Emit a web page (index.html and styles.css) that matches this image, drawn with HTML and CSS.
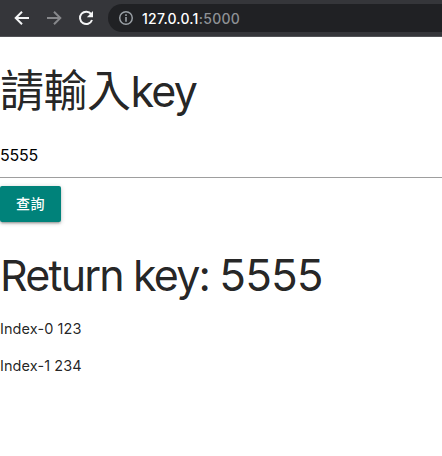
FILE: index.html
```html
<!DOCTYPE html>
<html lang="zh-Hant">
<head>
<meta charset="utf-8">
<title>127.0.0.1:5000</title>
<link rel="stylesheet" href="styles.css">
</head>
<body>
<header class="toolbar">
  <svg class="nav" viewBox="0 0 18 18"><path d="M16 9H3M9 2.7L2.7 9 9 15.3"/></svg>
  <svg class="nav nav-off" viewBox="0 0 18 18"><path d="M2 9h13M9 2.7L15.3 9 9 15.3"/></svg>
  <svg class="nav" viewBox="0 0 18 18"><path d="M14.2 5.2A6.2 6.2 0 1 0 15 11"/><path class="tip" d="M16 2v6.2H9.8z"/></svg>
  <div class="address">
    <svg class="info" viewBox="0 0 24 24"><path d="M10.8 6.5h2.4v2.4h-2.4zm0 4h2.4v7h-2.4zM12 1.5a10.5 10.5 0 1 0 0 21 10.5 10.5 0 0 0 0-21zm0 18.8a8.3 8.3 0 1 1 0-16.6 8.3 8.3 0 0 1 0 16.6z"/></svg>
    <span class="url">127.0.0.1<span class="port">:5000</span></span>
  </div>
</header>
<main>
  <h1 class="title"><span class="cjk">請輸入</span><span class="word">key</span></h1>
  <form>
    <input class="field" type="text" value="5555">
    <button class="btn" type="button">查詢</button>
  </form>
  <h1 class="result"><span class="word">Return key: </span>5555</h1>
  <p class="row">Index-0 123</p>
  <p class="row">Index-1 234</p>
</main>
</body>
</html>
```
FILE: styles.css
```css
* { box-sizing: border-box; }
body { margin: 0; background: #fff; color: rgba(0,0,0,.87); font-family: Inter, "Noto Sans CJK TC", sans-serif; font-size: 14.5px; overflow: hidden; }
.toolbar { display: flex; align-items: center; height: 37px; padding-left: 13px; background: #35363a; border-bottom: 1px solid #515256; }
.nav { width: 18px; height: 18px; margin-right: 14px; fill: none; stroke: #f4f5f6; stroke-width: 2; flex: none; }
.nav-off { stroke: #87888b; }
.tip { fill: #f4f5f6; stroke: none; }
.address { display: flex; align-items: center; flex: 1; height: 28px; padding-left: 10px; margin-left: -1px; margin-right: -20px; border-radius: 14px; background: #202124; }
.info { width: 16px; height: 16px; margin-right: 8px; fill: #9aa0a6; }
.url { font-size: 14px; font-weight: 500; letter-spacing: .23px; color: #fff; }
.port { font-weight: 450; letter-spacing: .3px; color: #8e9195; }
h1 { margin: 0; font-size: 44px; font-weight: 400; line-height: 48px; white-space: nowrap; }
.title { margin-top: 30px; height: 48px; }
.cjk { letter-spacing: -.5px; }
.word { font-size: 43px; letter-spacing: -1.85px; }
.field { display: block; width: 100%; height: 46px; margin: 17px 0 8px; padding: 0; border: 0; border-bottom: 1px solid #9e9e9e; outline: 0; font: 16px Inter, sans-serif; letter-spacing: -.2px; color: #000; }
.btn { display: block; width: 61px; height: 36px; padding: 0 0 2px; border: 0; border-radius: 2px; background: #00827a; color: #fff; font: 500 14px "Noto Sans CJK TC", sans-serif; letter-spacing: .5px; box-shadow: 0 2px 2px rgba(0,0,0,.14), 0 3px 1px -2px rgba(0,0,0,.12), 0 1px 5px rgba(0,0,0,.2); }
.result { margin-top: 29px; height: 48px; letter-spacing: -.9px; }
.row { margin: 19px 0 15px; line-height: 22px; letter-spacing: .07px; }
.row + .row { margin-top: 0; }
```
